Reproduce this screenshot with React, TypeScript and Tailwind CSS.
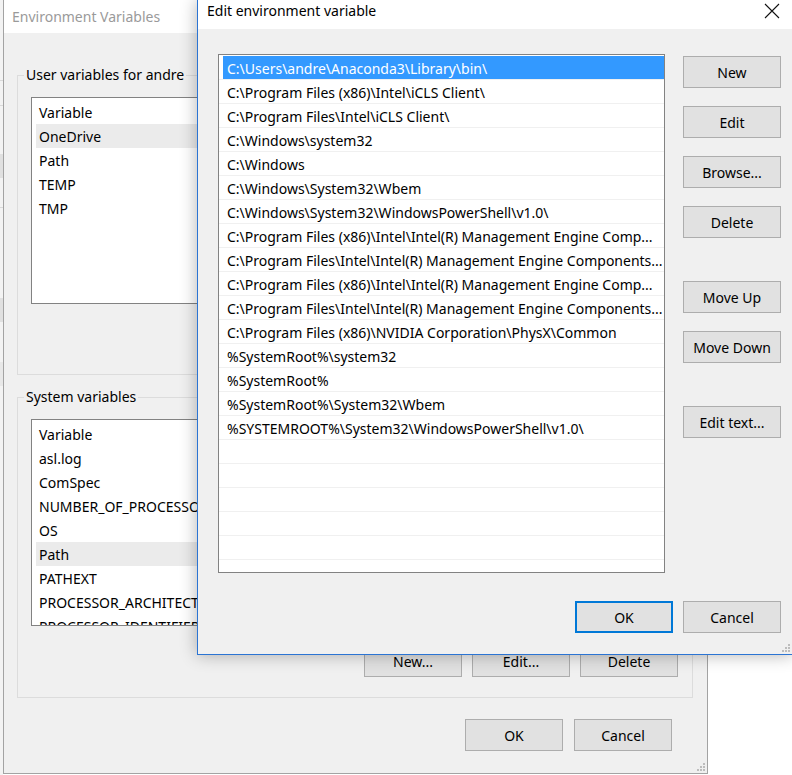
import React from "react";

const dialogItems = [
  "C:\\Users\\andre\\Anaconda3\\Library\\bin\\",
  "C:\\Program Files (x86)\\Intel\\iCLS Client\\",
  "C:\\Program Files\\Intel\\iCLS Client\\",
  "C:\\Windows\\system32",
  "C:\\Windows",
  "C:\\Windows\\System32\\Wbem",
  "C:\\Windows\\System32\\WindowsPowerShell\\v1.0\\",
  "C:\\Program Files (x86)\\Intel\\Intel(R) Management Engine Comp...",
  "C:\\Program Files\\Intel\\Intel(R) Management Engine Components...",
  "C:\\Program Files (x86)\\Intel\\Intel(R) Management Engine Comp...",
  "C:\\Program Files\\Intel\\Intel(R) Management Engine Components...",
  "C:\\Program Files (x86)\\NVIDIA Corporation\\PhysX\\Common",
  "%SystemRoot%\\system32",
  "%SystemRoot%",
  "%SystemRoot%\\System32\\Wbem",
  "%SYSTEMROOT%\\System32\\WindowsPowerShell\\v1.0\\",
  "",
  "",
  "",
  "",
  "",
  "",
];

const userVars = ["Variable", "OneDrive", "Path", "TEMP", "TMP"];
const sysVars = [
  "Variable",
  "asl.log",
  "ComSpec",
  "NUMBER_OF_PROCESSORS",
  "OS",
  "Path",
  "PATHEXT",
  "PROCESSOR_ARCHITECTURE",
  "PROCESSOR_IDENTIFIER",
];

function Btn({
  children,
  focused,
  className = "",
}: {
  children: React.ReactNode;
  focused?: boolean;
  className?: string;
}) {
  return (
    <div
      className={
        "w-[98px] h-[32px] flex items-center justify-center bg-[#e1e1e1] text-[14px] text-black shrink-0 " +
        (focused ? "border-2 border-[#0078d7] " : "border border-[#adadad] ") +
        className
      }
    >
      {children}
    </div>
  );
}

function Grip() {
  return (
    <svg width="8" height="8" viewBox="0 0 8 8" className="absolute right-[2px] bottom-[2px]">
      <rect x="6" y="0" width="2" height="2" fill="#bdbdbd" />
      <rect x="3" y="3" width="2" height="2" fill="#bdbdbd" />
      <rect x="6" y="3" width="2" height="2" fill="#bdbdbd" />
      <rect x="0" y="6" width="2" height="2" fill="#bdbdbd" />
      <rect x="3" y="6" width="2" height="2" fill="#bdbdbd" />
      <rect x="6" y="6" width="2" height="2" fill="#bdbdbd" />
    </svg>
  );
}

function VarList({ items, selected, height }: { items: string[]; selected: number; height: string }) {
  return (
    <div className={"ml-[13px] w-[648px] bg-white border border-[#828282] pt-[2px] overflow-hidden " + height}>
      {items.map((t, i) => (
        <div
          key={i}
          className={
            "ml-[4px] mr-[4px] h-[24px] pl-[3px] flex items-center whitespace-nowrap text-[14px] text-black " +
            (i === selected ? "bg-[#ebebeb]" : "")
          }
        >
          {t}
        </div>
      ))}
    </div>
  );
}

export default function App() {
  return (
    <div className="relative w-[792px] h-[775px] bg-white overflow-hidden font-['Noto_Sans',sans-serif] text-black">
      {/* sliver of a window further behind */}
      <div className="absolute left-0 top-0 w-[3px] h-[775px] bg-[#f3f3f3] flex flex-col">
        <div className="h-[80px]" />
        <div className="h-[26px] border-y border-[#d9d9d9]" />
        <div className="h-[48px]" />
        <div className="h-[24px] bg-[#e0e0e0]" />
        <div className="h-[30px] border-b border-[#d9d9d9]" />
        <div className="h-[90px]" />
        <div className="h-[24px] bg-[#e0e0e0]" />
        <div className="h-[40px]" />
        <div className="h-[24px] bg-[#e8e8e8]" />
      </div>

      {/* Background window: Environment Variables */}
      <div className="absolute left-[3px] top-0 w-[705px] h-[774px] bg-[#f0f0f0] border-x border-b border-[#a3a3a3] flex flex-col">
        <div className="h-[33px] bg-white pl-[8px] flex items-center text-[14px] text-[#9a9a9a] shrink-0">
          Environment Variables
        </div>
        <div className="flex flex-col">
          {/* User variables group */}
          <div className="ml-[13px] mt-[42px] w-[676px] h-[300px] border border-[#dcdcdc] flex flex-col">
            <div className="-mt-[11px] ml-[6px] px-[2px] h-[20px] leading-[20px] text-[14px] bg-[#f0f0f0] self-start">
              User variables for andre
            </div>
            <div className="mt-[12px]">
              <VarList items={userVars} selected={1} height="h-[207px]" />
            </div>
          </div>

          {/* System variables group */}
          <div className="ml-[13px] mt-[22px] w-[676px] h-[301px] border border-[#dcdcdc] flex flex-col">
            <div className="-mt-[11px] ml-[6px] px-[2px] h-[20px] leading-[20px] text-[14px] bg-[#f0f0f0] self-start">
              System variables
            </div>
            <div className="mt-[12px]">
              <VarList items={sysVars} selected={5} height="h-[207px]" />
            </div>
            <div className="mt-[19px] mr-[14px] flex justify-end gap-[10px]">
              <Btn>New...</Btn>
              <Btn>Edit...</Btn>
              <Btn>Delete</Btn>
            </div>
          </div>

          <div className="mt-[21px] mr-[35px] flex justify-end gap-[11px]">
            <Btn className="w-[97px]">OK</Btn>
            <Btn>Cancel</Btn>
          </div>
        </div>
        <Grip />
      </div>

      {/* Foreground dialog: Edit environment variable */}
      <div className="absolute left-[197px] top-0 w-[596px] h-[655px] bg-[#f0f0f0] border-x border-b border-[#2b74d3] shadow-[0_0_16px_rgba(0,0,0,0.3)] flex flex-col">
        <div className="h-[29px] bg-white flex items-start justify-between shrink-0">
          <div className="pl-[9px] pt-[1px] leading-[20px] text-[14px] text-black">Edit environment variable</div>
          <svg width="16" height="16" viewBox="0 0 16 16" className="mr-[12px] mt-[3px]">
            <path d="M1 1 L15 15 M15 1 L1 15" stroke="#111" strokeWidth="1.1" fill="none" />
          </svg>
        </div>
        <div className="flex pl-[20px] pt-[25px] pr-[11px]">
          <div className="w-[447px] h-[519px] bg-white border border-[#828282] pt-[1px] overflow-hidden shrink-0">
            {dialogItems.map((t, i) => (
              <div key={i} className="h-[24px] border-b border-[#f0f0f0] flex">
                <div
                  className={
                    "ml-[4px] flex-1 pl-[4px] pt-[1px] flex items-center whitespace-nowrap overflow-hidden text-[14px] " +
                    (i === 0 ? "bg-[#3399ff] text-white" : "text-black")
                  }
                >
                  {t}
                </div>
              </div>
            ))}
          </div>
          <div className="ml-[18px] pt-[2px] flex flex-col">
            <Btn>New</Btn>
            <Btn className="mt-[18px]">Edit</Btn>
            <Btn className="mt-[18px]">Browse...</Btn>
            <Btn className="mt-[18px]">Delete</Btn>
            <Btn className="mt-[43px]">Move Up</Btn>
            <Btn className="mt-[18px]">Move Down</Btn>
            <Btn className="mt-[43px]">Edit text...</Btn>
          </div>
        </div>
        <div className="mt-[28px] pr-[11px] flex justify-end gap-[10px]">
          <Btn focused>OK</Btn>
          <Btn>Cancel</Btn>
        </div>
        <Grip />
      </div>
    </div>
  );
}
